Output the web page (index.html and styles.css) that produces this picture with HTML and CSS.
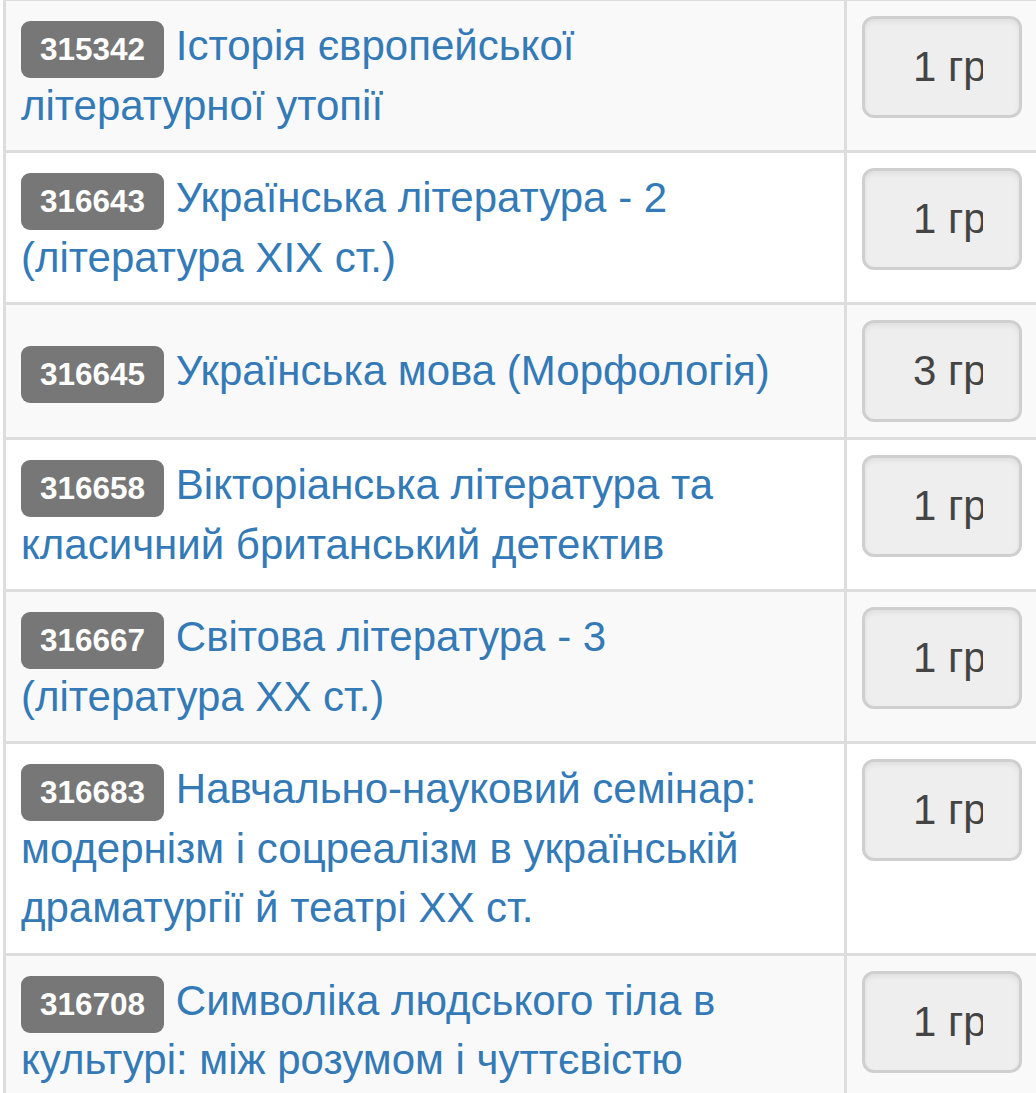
FILE: index.html
```html
<!DOCTYPE html>
<html lang="uk">

<head>
    <meta charset="UTF-8">
    <meta name="viewport" content="width=device-width, initial-scale=1.0">
    <title>Курси</title>
    <link rel="stylesheet" href="styles.css">
</head>

<body>
    <table class="course-table">
        <tbody>
            <tr>
                <td class="cell-name"><span class="label">315342</span> <a href="#">Історія європейської літературної утопії</a></td>
                <td class="cell-action"><button class="btn" disabled><span class="btn-text">1 група</span></button></td>
            </tr>
            <tr>
                <td class="cell-name"><span class="label">316643</span> <a href="#">Українська література - 2 (література XIX ст.)</a></td>
                <td class="cell-action"><button class="btn" disabled><span class="btn-text">1 група</span></button></td>
            </tr>
            <tr>
                <td class="cell-name"><span class="label">316645</span> <a href="#">Українська мова (Морфологія)</a></td>
                <td class="cell-action"><button class="btn" disabled><span class="btn-text">3 групи</span></button></td>
            </tr>
            <tr>
                <td class="cell-name"><span class="label">316658</span> <a href="#">Вікторіанська література та класичний британський детектив</a></td>
                <td class="cell-action"><button class="btn" disabled><span class="btn-text">1 група</span></button></td>
            </tr>
            <tr>
                <td class="cell-name"><span class="label">316667</span> <a href="#">Світова література - 3 (література XX ст.)</a></td>
                <td class="cell-action"><button class="btn" disabled><span class="btn-text">1 група</span></button></td>
            </tr>
            <tr>
                <td class="cell-name"><span class="label">316683</span> <a href="#">Навчально-науковий семінар: модернізм і соцреалізм в українській драматургії й театрі XX ст.</a></td>
                <td class="cell-action"><button class="btn" disabled><span class="btn-text">1 група</span></button></td>
            </tr>
            <tr>
                <td class="cell-name"><span class="label">316708</span> <a href="#">Символіка людського тіла в культурі: між розумом і чуттєвістю</a></td>
                <td class="cell-action"><button class="btn" disabled><span class="btn-text">1 група</span></button></td>
            </tr>
        </tbody>
    </table>
</body>

</html>
```

FILE: styles.css
```css
body {
    margin: 0;
    background: #fff;
    font-family: "Liberation Sans", Arial, "Helvetica Neue", sans-serif;
    color: #333;
}

.course-table {
    width: 1037px;
    margin: -2px 0 0 3px;
    table-layout: fixed;
    border-collapse: separate;
    border-spacing: 0;
    border-right: 3px solid #ddd;
    border-bottom: 3px solid #ddd;
    font-size: 42px;
    line-height: 59.5px;
}

.course-table td {
    padding: 15px;
    vertical-align: top;
    border-top: 3px solid #ddd;
    border-left: 3px solid #ddd;
}

.course-table tr:nth-child(odd) td {
    background: #f9f9f9;
}

.course-table .cell-name {
    vertical-align: middle;
}

.cell-action {
    width: 160px;
}

.label {
    display: inline;
    padding: 10px 19px 11px;
    font-size: 31.5px;
    font-weight: bold;
    line-height: 1;
    color: #fff;
    background: #777;
    border-radius: 9px;
    white-space: nowrap;
}

.cell-name a {
    color: #337ab7;
    text-decoration: none;
}

.btn {
    display: block;
    width: 160px;
    height: 102px;
    box-sizing: border-box;
    margin: 0;
    padding: 18px 36px;
    font-family: inherit;
    font-size: 42px;
    line-height: 60px;
    color: #444;
    background: #eeeeee;
    border: 3px solid #cfcfcf;
    border-radius: 12px;
    box-shadow: inset 0 3px 5px rgba(0, 0, 0, .06);
    text-align: left;
}

.btn-text {
    display: block;
    padding-left: 12px;
    overflow: hidden;
    white-space: nowrap;
}
```
